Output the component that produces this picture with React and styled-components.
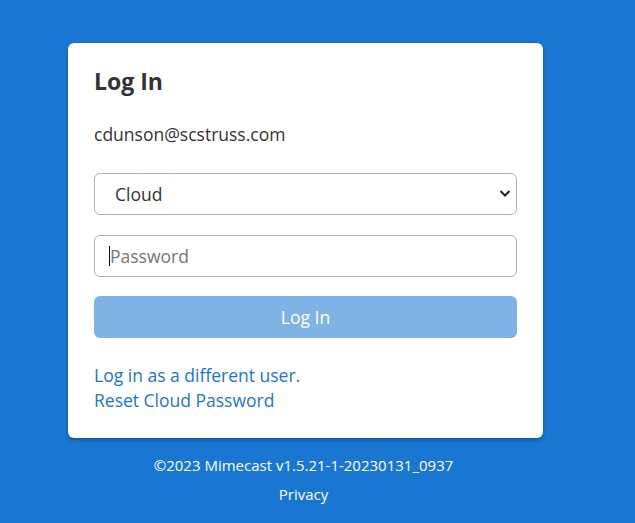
import React from "react";
import styled, { createGlobalStyle } from "styled-components";

const Global = createGlobalStyle`
  html, body { margin: 0; padding: 0; background: #1976d3; }
  body { font-family: "Open Sans", "Noto Sans", sans-serif; color: #333; }
`;

const Page = styled.div`
  min-height: 523px;
  padding: 43px 0 0 68px;
  box-sizing: border-box;
`;

const Column = styled.div`
  width: 475px;
  display: flex;
  flex-direction: column;
  align-items: center;
`;

const Card = styled.div`
  width: 100%;
  box-sizing: border-box;
  background: #fff;
  border-radius: 6px;
  box-shadow: 0 2px 4px rgba(0, 0, 0, 0.3);
  padding: 22px 26px 25px 26px;
  display: flex;
  flex-direction: column;
`;

const Title = styled.h1`
  margin: 0;
  font-size: 23px;
  font-weight: 700;
  line-height: 32px;
  color: #333;
`;

const Email = styled.div`
  margin-top: 25px;
  font-size: 17.5px;
  line-height: 24px;
  color: #333;
`;

const Field = styled.div`
  position: relative;
  margin-top: ${(p) => p.$mt}px;
`;

const Select = styled.select`
  appearance: none;
  width: 100%;
  height: 42px;
  box-sizing: border-box;
  border: 1px solid #b3b3b3;
  border-radius: 6px;
  background: #fff;
  font-family: inherit;
  font-size: 17.5px;
  color: #333;
  padding: 0 0 0 20px;
  outline: none;
`;

const Chevron = styled.svg`
  position: absolute;
  right: 6px;
  top: 15px;
  pointer-events: none;
`;

const Input = styled.input`
  width: 100%;
  height: 42px;
  box-sizing: border-box;
  border: 1px solid #b3b3b3;
  border-radius: 6px;
  background: #fff;
  font-family: inherit;
  font-size: 17.5px;
  color: #333;
  padding: 0 0 0 15px;
  outline: none;
  &::placeholder { color: #757575; }
`;

const Caret = styled.span`
  position: absolute;
  left: 15px;
  top: 11px;
  width: 1px;
  height: 20px;
  background: #111;
`;

const Button = styled.button`
  margin-top: 19px;
  width: 100%;
  height: 42px;
  border: none;
  border-radius: 6px;
  background: #80b3e5;
  color: #fff;
  font-family: inherit;
  font-size: 17.5px;
`;

const Links = styled.div`
  margin-top: 25px;
  display: flex;
  flex-direction: column;
`;

const Link = styled.a`
  font-size: 17.5px;
  line-height: 25px;
  color: #1b75d0;
  text-decoration: none;
`;

const Footer = styled.div`
  margin-top: 17px;
  padding-right: 4px;
  font-size: 15px;
  line-height: 21px;
  color: #fff;
  text-align: center;
`;

const FooterLine = styled.div`
  margin-top: ${(p) => p.$mt || 0}px;
`;

export default function App() {
  return (
    <>
      <Global />
      <Page>
        <Column>
          <Card>
            <Title>Log In</Title>
            <Email>cdunson@scstruss.com</Email>
            <Field $mt={27}>
              <Select defaultValue="cloud">
                <option value="cloud">Cloud</option>
              </Select>
              <Chevron width="12" height="10" viewBox="0 0 12 10">
                <path d="M1.5 3 L6 7.5 L10.5 3" fill="none" stroke="#222" strokeWidth="2" />
              </Chevron>
            </Field>
            <Field $mt={20}>
              <Input placeholder="Password" />
              <Caret />
            </Field>
            <Button>Log In</Button>
            <Links>
              <Link href="#">Log in as a different user.</Link>
              <Link href="#">Reset Cloud Password</Link>
            </Links>
          </Card>
          <Footer>
            <FooterLine>©2023 Mimecast v1.5.21-1-20230131_0937</FooterLine>
            <FooterLine $mt={8}>Privacy</FooterLine>
          </Footer>
        </Column>
      </Page>
    </>
  );
}
